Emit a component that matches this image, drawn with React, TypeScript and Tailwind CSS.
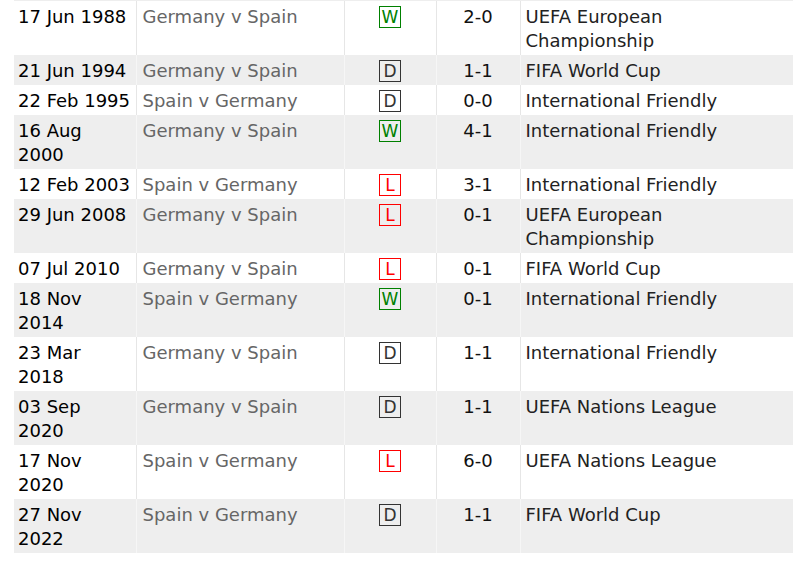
import React from "react";

type Result = "W" | "D" | "L";

type Match = {
  date: string;
  fixture: string;
  result: Result;
  score: string;
  competition: string;
};

const matches: Match[] = [
  { date: "17 Jun 1988", fixture: "Germany v Spain", result: "W", score: "2-0", competition: "UEFA European\nChampionship" },
  { date: "21 Jun 1994", fixture: "Germany v Spain", result: "D", score: "1-1", competition: "FIFA World Cup" },
  { date: "22 Feb 1995", fixture: "Spain v Germany", result: "D", score: "0-0", competition: "International Friendly" },
  { date: "16 Aug\n2000", fixture: "Germany v Spain", result: "W", score: "4-1", competition: "International Friendly" },
  { date: "12 Feb 2003", fixture: "Spain v Germany", result: "L", score: "3-1", competition: "International Friendly" },
  { date: "29 Jun 2008", fixture: "Germany v Spain", result: "L", score: "0-1", competition: "UEFA European\nChampionship" },
  { date: "07 Jul 2010", fixture: "Germany v Spain", result: "L", score: "0-1", competition: "FIFA World Cup" },
  { date: "18 Nov\n2014", fixture: "Spain v Germany", result: "W", score: "0-1", competition: "International Friendly" },
  { date: "23 Mar\n2018", fixture: "Germany v Spain", result: "D", score: "1-1", competition: "International Friendly" },
  { date: "03 Sep\n2020", fixture: "Germany v Spain", result: "D", score: "1-1", competition: "UEFA Nations League" },
  { date: "17 Nov\n2020", fixture: "Spain v Germany", result: "L", score: "6-0", competition: "UEFA Nations League" },
  { date: "27 Nov\n2022", fixture: "Spain v Germany", result: "D", score: "1-1", competition: "FIFA World Cup" },
];

const badgeStyles: Record<Result, string> = {
  W: "border-[#008000] text-[#008000]",
  D: "border-[#333333] text-[#333333]",
  L: "border-[#ff0000] text-[#ff0000]",
};

const ResultBadge = ({ result }: { result: Result }) => (
  <span
    className={`mt-[1px] inline-flex h-[22px] w-[22px] items-center justify-center border align-top text-[17px] leading-none ${badgeStyles[result]}`}
  >
    {result}
  </span>
);

export default function App() {
  return (
    <div
      className="min-h-[561px] bg-white pl-[14px]"
      style={{ fontFamily: '"DejaVu Sans", Verdana, sans-serif' }}
    >
      <div className="h-[1px] w-[779px] bg-[#eeeeee]" />
      <table className="w-[779px] table-fixed border-collapse text-[18px] leading-[24px]">
        <colgroup>
          <col className="w-[122px]" />
          <col className="w-[208px]" />
          <col className="w-[92px]" />
          <col className="w-[84px]" />
          <col className="w-[273px]" />
        </colgroup>
        <tbody>
          {matches.map((m, i) => {
            const grey = i % 2 === 1;
            const cell = `align-top pt-[4px] pb-[2px] px-[4px] whitespace-pre-line ${
              grey ? "border-[#f6f6f6]" : "border-[#e6e6e6]"
            }`;
            return (
              <tr key={i} className={grey ? "bg-[#eeeeee]" : "bg-white"}>
                <td className={`${cell} border-r text-black`}>{m.date}</td>
                <td className={`${cell} border-r pl-[6px] text-[#666666]`}>{m.fixture}</td>
                <td className={`${cell} border-r text-center`}>
                  <ResultBadge result={m.result} />
                </td>
                <td className={`${cell} border-r text-center text-[#111111]`}>{m.score}</td>
                <td className={`${cell} pl-[5px] text-[#222222]`}>{m.competition}</td>
              </tr>
            );
          })}
        </tbody>
      </table>
    </div>
  );
}
